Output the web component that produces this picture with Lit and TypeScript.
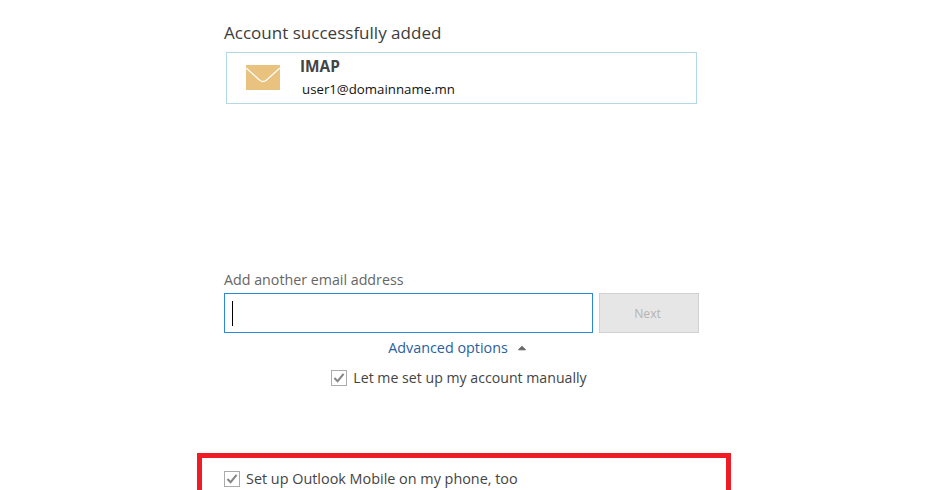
import { LitElement, html, css } from "lit";
import { customElement } from "lit/decorators.js";

const check = html`<svg class="check" width="16" height="16" viewBox="0 0 16 16"><rect x="0.5" y="0.5" width="15" height="15" fill="#fff" stroke="#ababab"/><path d="M3.4 8 L6.6 11.2 L12.6 3.8" fill="none" stroke="#858585" stroke-width="2"/></svg>`;

@customElement("app-root")
export class AppRoot extends LitElement {
  static styles = css`
    :host { display: block; width: 931px; height: 490px; overflow: hidden; background: #fff; font-family: "Open Sans", "Noto Sans", sans-serif; color: #444; }
    .col { width: 475px; margin-left: 224px; display: flex; flex-direction: column; }
    h1 { margin: 0; padding-top: 21px; font-size: 17.05px; line-height: 24px; font-weight: 400; color: #3c3c3c; height: 52px; box-sizing: border-box; }
    .card { margin-left: 2px; width: 471px; height: 52px; box-sizing: border-box; border: 1px solid #b3d8e8; display: flex; }
    .env { margin: 12px 0 0 19px; display: block; }
    .info { margin-left: 20px; display: flex; flex-direction: column; }
    .name { font-size: 15.4px; font-weight: 700; line-height: 19px; margin-top: 4px; color: #444; }
    .mail { font-size: 13.25px; line-height: 18px; margin: 4px 0 0 2px; color: #111; }
    .label { margin-top: 166px; font-size: 14.25px; line-height: 20px; color: #666; height: 20px; }
    .row { margin-top: 3px; display: flex; gap: 6px; height: 40px; }
    .input { width: 369px; box-sizing: border-box; border: 1px solid #2b88d8; display: flex; align-items: center; padding-left: 7px; }
    .caret { width: 1px; height: 25px; background: #000; }
    .next { width: 100px; box-sizing: border-box; border: 1px solid #d2d2d2; background: #e6e6e6; color: #b4b4b4; font-size: 12.2px; display: flex; align-items: center; justify-content: center; padding-right: 3px; }
    .adv { margin-top: 5px; height: 20px; display: flex; align-items: center; justify-content: center; gap: 9px; font-size: 14.35px; line-height: 20px; color: #2b5f9e; padding-right: 8px; }
    .chk { display: flex; align-items: center; gap: 6px; line-height: 20px; color: #444; }
    .manual { margin-top: 10px; justify-content: center; padding-right: 5px; font-size: 14.15px; }
    .red { margin: 65px 0 0 197px; width: 534px; height: 60px; box-sizing: border-box; border: 5px solid #ee1c25; padding: 11px 0 0 22px; font-size: 14.4px; }
  `;

  render() {
    return html`
      <div class="col">
        <h1>Account successfully added</h1>
        <div class="card">
          <svg class="env" width="34" height="25" viewBox="0 0 34 25"><rect width="34" height="25" fill="#e9c27f"/><path d="M0 3 L14 15.5 Q17 17.5 20 15.5 L34 3" fill="none" stroke="#fff" stroke-width="1.3"/></svg>
          <div class="info">
            <div class="name">IMAP</div>
            <div class="mail">user1@domainname.mn</div>
          </div>
        </div>
        <div class="label">Add another email address</div>
        <div class="row">
          <div class="input"><div class="caret"></div></div>
          <div class="next">Next</div>
        </div>
        <div class="adv">
          <span>Advanced options</span>
          <svg width="10" height="6" viewBox="0 0 10 6"><path d="M1.5 4.8 L5 1.3 L8.5 4.8 Z" fill="#666" stroke="#666" stroke-width="1"/></svg>
        </div>
        <div class="chk manual">${check}<span>Let me set up my account manually</span></div>
      </div>
      <div class="red">
        <div class="chk">${check}<span>Set up Outlook Mobile on my phone, too</span></div>
      </div>
    `;
  }
}
